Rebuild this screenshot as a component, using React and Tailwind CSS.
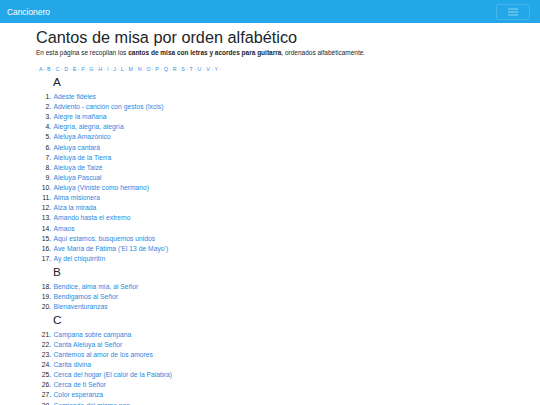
import React from "react";

const sections = [
  {
    letter: "A",
    start: 1,
    items: [
      "Adeste fideles",
      "Adviento - canción con gestos (Ixcis)",
      "Alegre la mañana",
      "Alegría, alegría, alegría",
      "Aleluya Amazónico",
      "Aleluya cantará",
      "Aleluya de la Tierra",
      "Aleluya de Taizé",
      "Aleluya Pascual",
      "Aleluya (Viniste como hermano)",
      "Alma misionera",
      "Alza la mirada",
      "Amando hasta el extremo",
      "Amaos",
      "Aquí estamos, busquemos unidos",
      "Ave María de Fátima ('El 13 de Mayo')",
      "Ay del chiquirritín",
    ],
  },
  {
    letter: "B",
    start: 18,
    items: ["Bendice, alma mía, al Señor", "Bendigamos al Señor", "Bienaventuranzas"],
  },
  {
    letter: "C",
    start: 21,
    items: [
      "Campana sobre campana",
      "Canta Aleluya al Señor",
      "Cantemos al amor de los amores",
      "Carita divina",
      "Cerca del hogar (El calor de la Palabra)",
      "Cerca de ti Señor",
      "Color esperanza",
      "Comiendo del mismo pan",
    ],
  },
];

const letters = "A B C D E F G H I J L M N O P Q R S T U V Y".split(" ");

export default function App() {
  return (
    <div className="min-h-[405px] bg-white text-[#212529] font-['Liberation_Sans',Arial,sans-serif] text-[6.75px] leading-[10.125px]">
      <nav className="h-[23px] bg-[#24a7e8] flex items-center justify-between px-[7px]">
        <span className="text-white text-[8.4px] leading-[12px]">Cancionero</span>
        <button className="w-[34px] h-[16px] mr-[3px] border border-white/15 rounded-[2px] flex items-center justify-center">
          <svg width="10" height="8" viewBox="0 0 10 8">
            <path d="M0 1h10M0 4h10M0 7h10" stroke="rgba(255,255,255,0.5)" strokeWidth="1" />
          </svg>
        </button>
      </nav>
      <main className="px-[36px]">
        <h1 className="text-[16.25px] leading-[20.25px] font-normal mt-[4px] mb-[1px]">
          Cantos de misa por orden alfabético
        </h1>
        <p className="mb-[7px] text-[6.5px]">
          En esta página se recopilan los <b>cantos de misa con letras y acordes para guitarra</b>, ordenados alfabéticamente.
        </p>
        <div className="text-[5.4px] leading-[8px] text-[#3b8fe3] mb-[2px] whitespace-pre">
          {"·"}
          {letters.map((l) => (
            <span key={l}>{" " + l + " ·"}</span>
          ))}
        </div>
        {sections.map((s) => (
          <div key={s.letter}>
            <h3 className="pl-[17px] text-[11.8px] leading-[14.2px] mb-[2.4px]">{s.letter}</h3>
            <ol start={s.start} className="list-decimal pl-[17px] mb-[1px]">
              {s.items.map((it) => (
                <li key={it} className="pl-[0.5px]">
                  <a className="text-[#2b88e0]">{it}</a>
                </li>
              ))}
            </ol>
          </div>
        ))}
      </main>
    </div>
  );
}
